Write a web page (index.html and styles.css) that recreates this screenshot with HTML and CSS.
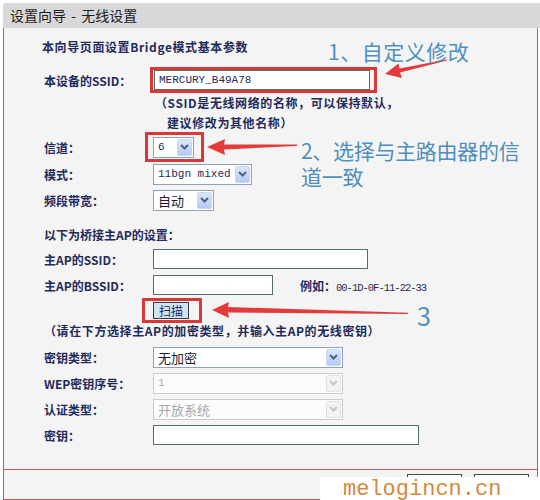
FILE: index.html
```html
<!DOCTYPE html>
<html lang="zh-CN">
<head>
    <meta charset="UTF-8">
    <title>设置向导 - 无线设置</title>
    <link rel="stylesheet" href="styles.css">
</head>
<body>
<div class="page">
    <div class="wizard">
        <div class="title-bar">设置向导 - 无线设置</div>

        <div class="panel">
            <p class="intro">本向导页面设置Bridge模式基本参数</p>

            <div class="row">
                <span class="label">本设备的SSID：</span>
                <span class="mark mark-ssid">
                    <input class="text mono w-ssid" type="text" value="MERCURY_B49A78">
                </span>
            </div>
            <p class="note">（SSID是无线网络的名称，可以保持默认，</p>
            <p class="note note-indent">建议修改为其他名称）</p>

            <div class="row row-channel">
                <span class="label">信道：</span>
                <span class="mark mark-channel">
                    <span class="select w-channel">
                        <span class="value mono">6</span>
                        <span class="drop"><svg width="9" height="6" viewBox="0 0 9 6"><path d="M1 1l3.5 3.5L8 1" fill="none" stroke-width="2"/></svg></span>
                    </span>
                </span>
            </div>

            <div class="row">
                <span class="label">模式：</span>
                <span class="select w-mode">
                    <span class="value mono">11bgn mixed</span>
                    <span class="drop"><svg width="9" height="6" viewBox="0 0 9 6"><path d="M1 1l3.5 3.5L8 1" fill="none" stroke-width="2"/></svg></span>
                </span>
            </div>

            <div class="row">
                <span class="label">频段带宽：</span>
                <span class="select w-band">
                    <span class="value">自动</span>
                    <span class="drop"><svg width="9" height="6" viewBox="0 0 9 6"><path d="M1 1l3.5 3.5L8 1" fill="none" stroke-width="2"/></svg></span>
                </span>
            </div>

            <p class="section">以下为桥接主AP的设置：</p>

            <div class="row">
                <span class="label">主AP的SSID：</span>
                <input class="text w-apssid" type="text" value="">
            </div>

            <div class="row">
                <span class="label">主AP的BSSID：</span>
                <input class="text w-bssid" type="text" value="">
                <span class="hint">例如：<span class="mac">00-1D-0F-11-22-33</span></span>
            </div>

            <div class="row row-scan">
                <span class="label"></span>
                <span class="mark mark-scan">
                    <button class="scan" type="button">扫描</button>
                </span>
            </div>

            <p class="enc-note">（请在下方选择主AP的加密类型，并输入主AP的无线密钥）</p>

            <div class="row row-key">
                <span class="label">密钥类型：</span>
                <span class="select w-key">
                    <span class="value">无加密</span>
                    <span class="drop"><svg width="9" height="6" viewBox="0 0 9 6"><path d="M1 1l3.5 3.5L8 1" fill="none" stroke-width="2"/></svg></span>
                </span>
            </div>

            <div class="row">
                <span class="label">WEP密钥序号：</span>
                <span class="select w-key is-disabled">
                    <span class="value mono">1</span>
                    <span class="drop"><svg width="9" height="6" viewBox="0 0 9 6"><path d="M1 1l3.5 3.5L8 1" fill="none" stroke-width="2"/></svg></span>
                </span>
            </div>

            <div class="row">
                <span class="label">认证类型：</span>
                <span class="select w-key is-disabled">
                    <span class="value">开放系统</span>
                    <span class="drop"><svg width="9" height="6" viewBox="0 0 9 6"><path d="M1 1l3.5 3.5L8 1" fill="none" stroke-width="2"/></svg></span>
                </span>
            </div>

            <div class="row">
                <span class="label">密钥：</span>
                <input class="text w-pass" type="text" value="">
            </div>
        </div>

        <div class="footer">
            <button class="nav-btn" type="button">上一步</button>
            <button class="nav-btn" type="button">下一步</button>
        </div>
    </div>

    <!-- annotations drawn over the screenshot -->
    <svg class="arrows" width="540" height="500" viewBox="0 0 540 500">
        <polygon points="385,74 402,78 400,72.5 447,60.6 446.8,59.4 399.5,68.5 398.5,63.5"/>
        <polygon points="207,147 225,155 224,149.5 297,146 297,144.5 224,144.5 225,139"/>
        <polygon points="212,310 229,318 228,312.5 408,314 408,312.8 228,307 229,302"/>
    </svg>

    <div class="callout callout-1">1、自定义修改</div>
    <div class="callout callout-2">
        <div>2、选择与主路由器的信</div>
        <div>道一致</div>
    </div>
    <div class="callout callout-3">3</div>

    <div class="watermark">melogincn.cn</div>
</div>
</body>
</html>
```

FILE: styles.css
```css
:root {
    --label-color: #1e2b5c;
    --frame-color: #c25b57;
    --panel-bg: #f5f4f4;
    --mark-color: #d93838;
    --arrow-color: #e33b3b;
    --callout-color: #4d8fc0;
}

* {
    box-sizing: border-box;
    margin: 0;
    padding: 0;
}

body {
    font-family: "Noto Sans CJK SC", sans-serif;
    font-size: 12px;
    color: var(--label-color);
    background: #fff;
}

.page {
    position: relative;
    width: 540px;
    height: 500px;
    overflow: hidden;
}

.wizard {
    padding: 3px 2px 0 3px;
}

.title-bar {
    height: 25px;
    margin-right: -2px;
    padding-left: 7px;
    background: #d8d8d8;
    border-radius: 3px 0 0 0;
    font-size: 14px;
    line-height: 25px;
    color: #1c1c1c;
    word-spacing: 2px;
}

.panel {
    background: var(--panel-bg);
    border: 1px solid var(--frame-color);
    border-top: none;
    padding: 9px 0 21px 40px;
}

.intro {
    margin-left: -2px;
    line-height: 20px;
    font-weight: bold;
    letter-spacing: 0.6px;
    margin-bottom: 10px;
}

.row {
    display: flex;
    align-items: center;
    height: 26px;
}

.row-channel {
    height: 28px;
}

.row-scan {
    height: 24px;
}

.row-key {
    margin-top: 5px;
}

.label {
    width: 109px;
    flex-shrink: 0;
    font-weight: bold;
}

.note {
    padding-left: 111px;
    line-height: 20px;
    font-weight: bold;
    letter-spacing: 0.6px;
}

.note-indent {
    padding-left: 123px;
}

.section {
    margin-top: 11px;
    line-height: 22px;
    font-weight: bold;
}

.enc-note {
    line-height: 17px;
    font-weight: bold;
    letter-spacing: 0.6px;
}

.mono {
    font-family: "Liberation Mono", monospace;
    font-size: 11px;
}

/* red annotation frames */
.mark {
    display: inline-flex;
    align-items: center;
    flex-shrink: 0;
    border: 3px solid var(--mark-color);
}

.mark-ssid {
    height: 26px;
    margin-left: -3px;
    padding: 0 4px 0 1px;
}

.mark-channel {
    height: 30px;
    margin-left: -8px;
    padding: 0 7px 0 5px;
}

.mark-scan {
    height: 25px;
    margin-left: -11px;
    padding: 0 10px 0 8px;
}

/* inputs */
.text {
    height: 20px;
    padding: 0 4px;
    border: 1px solid #566b6e;
    background: #fff;
    color: var(--label-color);
    font-family: "Liberation Mono", monospace;
    font-size: 11px;
    outline: none;
}

.w-ssid { width: 216px; }
.w-apssid { width: 215px; }
.w-bssid { width: 120px; }
.w-pass { width: 266px; }

.hint {
    margin-left: 27px;
    font-weight: bold;
    white-space: nowrap;
}

.mac {
    font-family: "Liberation Mono", monospace;
    font-weight: normal;
    font-size: 10.5px;
    letter-spacing: -1px;
}

/* select boxes */
.select {
    display: inline-flex;
    align-items: center;
    height: 21px;
    border: 1px solid #8ea3b6;
    background: #fff;
    flex-shrink: 0;
}

.select .value {
    flex: 1;
    padding-left: 4px;
    font-size: 13px;
    color: #1b1b2e;
    white-space: nowrap;
}

.select .value.mono {
    font-size: 11px;
    color: var(--label-color);
}

.drop {
    display: flex;
    align-items: center;
    justify-content: center;
    width: 15px;
    height: 17px;
    margin-right: 1px;
    border: 1px solid #c8d6f6;
    border-radius: 2px;
    background: linear-gradient(#dbe6fc, #b6caf2);
}

.drop path {
    stroke: #4d6185;
}

.w-channel { width: 41px; }
.w-mode { width: 99px; }
.w-band { width: 61px; }
.w-key { width: 190px; }

.select.is-disabled {
    border-color: #cbcbcb;
    background: #fcfcfc;
}

.select.is-disabled .value {
    color: #a8a8a8;
}

.select.is-disabled .drop {
    border-color: #e2e2e2;
    background: #f3f3f3;
}

.select.is-disabled .drop path {
    stroke: #c4c4c4;
}

.scan {
    width: 36px;
    height: 17px;
    border: 1px solid #3c3c3c;
    background: #cfe3f3;
    color: var(--label-color);
    font-family: inherit;
    font-size: 12px;
    line-height: 15px;
}

.footer {
    display: flex;
    justify-content: flex-end;
    gap: 12px;
    height: 30px;
    padding: 4px 8px 0 0;
    background: var(--panel-bg);
    border: 1px solid var(--frame-color);
    border-top: none;
}

.nav-btn {
    width: 55px;
    height: 20px;
    border: 1px solid #4a4a4a;
    background: linear-gradient(#fff, #dcdcdc);
    font-family: inherit;
    font-size: 12px;
    color: #222;
}

/* overlays */
.arrows {
    position: absolute;
    top: 0;
    left: 0;
    pointer-events: none;
}

.arrows polygon {
    fill: var(--arrow-color);
}

.callout {
    position: absolute;
    color: var(--callout-color);
    white-space: nowrap;
}

.callout-1 {
    left: 328px;
    top: 38px;
    font-size: 21px;
    line-height: 26px;
    letter-spacing: 0.5px;
}

.callout-2 {
    left: 301px;
    top: 137px;
    font-size: 21px;
    line-height: 26px;
    letter-spacing: -0.3px;
}

.callout-3 {
    left: 417px;
    top: 303px;
    font-size: 25px;
    line-height: 25px;
}

.watermark {
    position: absolute;
    left: 320px;
    top: 477px;
    width: 220px;
    height: 23px;
    padding-left: 23px;
    background: #fff;
    font-family: "Liberation Mono", monospace;
    font-size: 22px;
    line-height: 26px;
    color: #d4893c;
}
```
